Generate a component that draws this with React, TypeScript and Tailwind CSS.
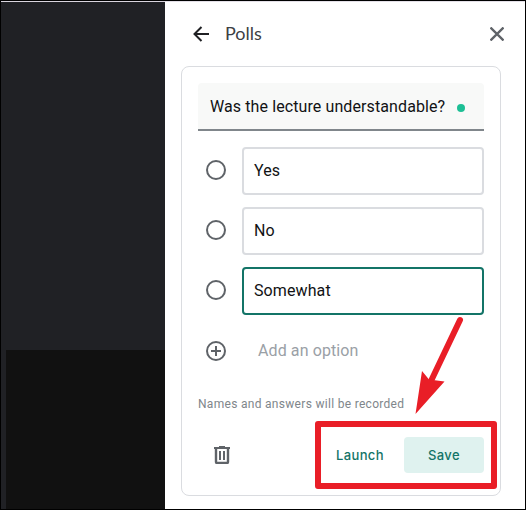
import { useState } from "react";

const initialOptions = ["Yes", "No", "Somewhat"];

export default function PollsPage() {
  const [options, setOptions] = useState<string[]>(initialOptions);
  const [activeOption, setActiveOption] = useState(2);

  const handleAddOption = () => {
    setOptions([...options, ""]);
    setActiveOption(options.length);
  };

  return (
    <main className="relative flex h-[510px] w-[526px] overflow-hidden border border-black bg-white font-['Roboto',sans-serif]">
      {/* Meeting area */}
      <div className="flex w-[164px] shrink-0 flex-col border-t border-[#d9d5df] bg-[#202125] pl-[5px]">
        <div className="h-[348px] shrink-0" />
        <div className="flex-1 bg-[#111111]" />
      </div>

      {/* Side panel */}
      <div className="flex-1 border-t border-[#e4e0e8] pl-4 pr-6">
        <header className="flex h-16 items-center pl-3">
          <svg className="size-4 shrink-0" viewBox="0 0 16 16" fill="none" stroke="#202124" strokeWidth="2">
            <path d="M16 8H1.5M8.5 1L1.5 8l7 7" />
          </svg>
          <h1 className="-mt-0.5 ml-4 flex-1 font-['Lato',sans-serif] text-[18px] leading-6 text-[#3c4043]">
            Polls
          </h1>
          <button aria-label="Close" className="-mr-[3px]">
            <svg className="size-[14px]" viewBox="0 0 14 14" fill="none" stroke="#5f6368" strokeWidth="2.3">
              <path d="M.5 .5l13 13M13.5 .5l-13 13" />
            </svg>
          </button>
        </header>

        <section className="flex h-[430px] w-80 flex-col rounded-lg border border-[#dadce0] px-4 pt-4">
          <div className="flex h-12 shrink-0 items-center rounded-t border-b-2 border-[#80868b] bg-[#f8f9f8] pl-3 text-[16px] tracking-[0.1px] text-[#111214]">
            <span className="whitespace-nowrap pt-0.5">Was the lecture understandable?</span>
            <span className="ml-3 mt-[3px] size-2 shrink-0 rounded-full bg-[#1dbf95]" />
          </div>

          <div className="mt-4 flex flex-col gap-3">
            {options.map((option, index) => (
              <div key={index} className="flex items-center" onClick={() => setActiveOption(index)}>
                <span className="ml-2 -mt-0.5 size-5 shrink-0 rounded-full border-2 border-[#5f6368]" />
                <div
                  className={
                    index === activeOption
                      ? "ml-4 flex h-12 flex-1 items-center rounded border-2 border-[#137467] pl-2.5 text-[16px] tracking-[0.1px] text-[#111214]"
                      : "ml-4 flex h-12 flex-1 items-center rounded border-2 border-[#dadce0] pl-2.5 text-[16px] tracking-[0.1px] text-[#111214]"
                  }
                >
                  {option}
                </div>
              </div>
            ))}
          </div>

          <button className="mt-6 flex h-6 shrink-0 items-center pl-2" onClick={handleAddOption}>
            <svg className="size-5" viewBox="0 0 20 20" fill="none" stroke="#5f6368" strokeWidth="2">
              <circle cx="10" cy="10" r="9" />
              <path d="M10 5v10M5 10h10" />
            </svg>
            <span className="ml-8 text-[16px] tracking-[0.1px] text-[#9aa0a6]">Add an option</span>
          </button>

          <p className="mt-[33px] text-[12px] leading-4 tracking-[0.3px] text-[#80868b]">
            Names and answers will be recorded
          </p>

          <footer className="mt-[25px] flex h-9 items-center font-['Inter',sans-serif] text-[13px] font-medium tracking-[0.35px] text-[#137467]">
            <svg className="ml-[15px] size-[18px] shrink-0" viewBox="0 0 18 18" fill="none" stroke="#5f6368" strokeWidth="2">
              <path d="M1 2h16M6 1h6" />
              <path d="M3 2v14q0 1 1 1h10q1 0 1-1V2" strokeWidth="2.4" />
              <path d="M7 5v9M11 5v9" />
            </svg>
            <button className="ml-auto h-9 w-20 pt-0.5">Launch</button>
            <button className="ml-1 h-9 w-20 rounded bg-[#dff2ef] pt-0.5">Save</button>
          </footer>
        </section>
      </div>

      {/* Highlight over the action buttons */}
      <div className="pointer-events-none absolute left-[314px] top-[420px] h-[68px] w-[182px] rounded-[3px] border-[6px] border-[#e91e27]" />
      <svg className="pointer-events-none absolute left-[409px] top-[309px] h-[110px] w-[60px]" viewBox="410 310 60 110">
        <path d="M460 320L431 381" stroke="#e91e27" strokeWidth="6" strokeLinecap="round" />
        <path d="M415.5 414L422 371L429 379.5L444.5 381.5Z" fill="#e91e27" />
      </svg>
    </main>
  );
}
